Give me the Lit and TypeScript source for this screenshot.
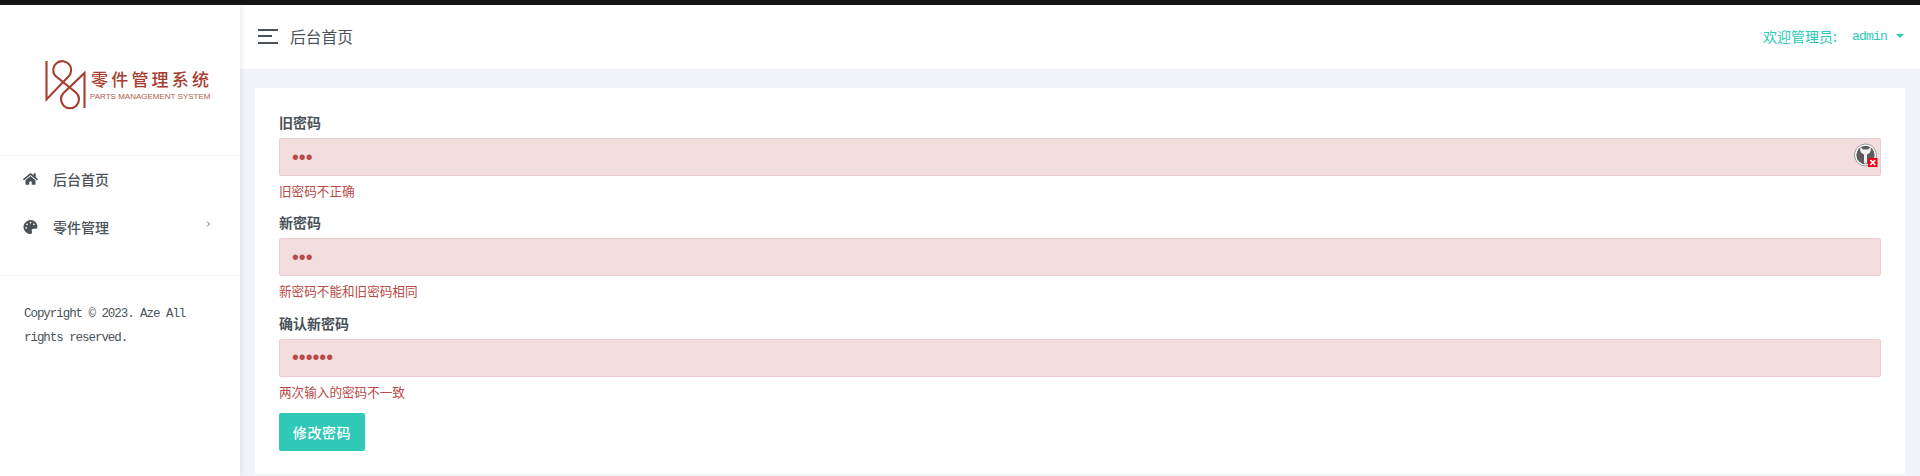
import { LitElement, html, css } from "lit";
import { customElement } from "lit/decorators.js";

@customElement("app-root")
export class AppRoot extends LitElement {
  static styles = css`
    :host { display: block; height: 476px; overflow: hidden; background: #f3f4f9; color: #4b5359;
      font-family: "Noto Sans CJK SC", "Noto Sans", sans-serif; }
    * { box-sizing: border-box; }
    .topline { height: 5px; background: #141414; }
    .layout { display: flex; height: 471px; }
    .side { width: 240px; flex: none; background: #fff; box-shadow: 1px 0 6px rgba(60,70,110,.12); position: relative; z-index: 1; }
    .logo { height: 151px; border-bottom: 1px solid #f3f4f6; display: flex; padding: 54px 0 0 45px; }
    .logo svg { width: 42px; height: 52px; flex: none; display: block; }
    .logo-text { margin-left: 3px; padding-top: 10px; color: #a63d2f; display: flex; flex-direction: column; }
    .logo-cn { font-size: 17px; font-weight: 500; line-height: 20px; letter-spacing: 3.2px; white-space: nowrap; margin-left: 1px; }
    .logo-en { font: 8px/11px "Liberation Sans", sans-serif; white-space: nowrap; margin-top: 2px; opacity: .85; }
    .menu { height: 120px; border-bottom: 1px solid #f3f4f6; }
    .item { height: 48px; display: flex; align-items: center; padding: 0 23px 3px; font-size: 14px; font-weight: 500; color: #4b5359; }
    .item + .item { padding-bottom: 2px; }
    .item svg.ic { width: 15px; height: 14px; fill: #4b5359; flex: none; }
    .item span { margin-left: 15px; flex: 1; }
    .chev { width: 5px; height: 6px; fill: none; stroke: #6b7278; stroke-width: 1; margin-top: -6px; margin-right: 6px; }
    .copy { padding: 26px 20px 0 24px; font: 12.5px/24px "Liberation Mono", monospace; letter-spacing: -1.05px; color: #4b5359; }
    .main { flex: 1; min-width: 0; display: flex; flex-direction: column; }
    .head { height: 64px; background: #fff; display: flex; align-items: center; padding: 0 16px 2px 18px; }
    .burger { width: 20px; display: flex; flex-direction: column; gap: 4.5px; }
    .burger i { display: block; height: 2px; background: #4b5359; }
    .burger i:nth-child(2) { width: 14px; }
    .title { margin-left: 12px; font-size: 15.75px; flex: 1; color: #4b5359; }
    .user { display: flex; align-items: center; color: #2bcab7; font-size: 14px; }
    .user b { font: 13px "Liberation Mono", monospace; letter-spacing: -.8px; margin-left: 15px; padding-top: 1px; }
    .caret { width: 0; height: 0; border-left: 4px solid transparent; border-right: 4px solid transparent; border-top: 4.5px solid #2bcab7; margin-left: 9px; }
    .content { padding: 19px 15px 0; }
    .card { background: #fff; height: 386px; padding: 26px 24px 0; }
    .group { margin-bottom: 13.5px; }
    .group.last { margin-bottom: 11.6px; }
    label { display: block; font-size: 14px; font-weight: 700; line-height: 16px; margin-bottom: 8px; color: #4b5359; }
    .field { position: relative; }
    input { display: block; width: 100%; height: 38px; background: #f2dede; border: 1px solid #ebccd1; border-radius: 2px;
      padding: 0 12px; color: #b94a48; font-size: 19.5px; font-family: "Liberation Sans", sans-serif; outline: none; }
    .err { margin-top: 6px; font-size: 12.6px; line-height: 18.9px; color: #b94a48; }
    .pm { position: absolute; right: 3px; top: 5px; width: 24px; height: 24px; }
    button { display: block; width: 86px; height: 38px; border: 0; border-radius: 2px; background: #30c9b7; color: #fff;
      font: 500 14px "Noto Sans CJK SC", sans-serif; letter-spacing: .6px; padding: 0; }
  `;

  private group(name: string, value: string, err: string, icon = false, last = false) {
    return html`<div class="group ${last ? "last" : ""}">
      <label>${name}</label>
      <div class="field">
        <input type="password" .value=${value} />
        ${icon
          ? html`<svg class="pm" viewBox="0 0 24 24">
              <circle cx="11.5" cy="12" r="11" fill="#fff" stroke="#9a9a9a" stroke-width="1" />
              <circle cx="11.5" cy="12" r="9.2" fill="#5c5c5c" />
              <path d="M6.5 4 Q5 9.5 10 11.5 V20.5 H13 V11.5 Q18 9.5 16.5 4 L14 6.5 H9 Z" fill="#f2f2f2" />
              <rect x="14" y="15" width="9.5" height="9" fill="#f5000f" />
              <path d="M16.4 17 L21.2 22 M21.2 17 L16.4 22" stroke="#fff" stroke-width="1.8" />
            </svg>`
          : ""}
      </div>
      <div class="err">${err}</div>
    </div>`;
  }

  render() {
    return html`
      <div class="topline"></div>
      <div class="layout">
        <aside class="side">
          <div class="logo">
            <svg viewBox="45 59 42 52">
              <path d="M46.5 61 V99.5 L68 77 A9 9 0 1 0 55 75.5 L76.5 93 A9 9 0 1 1 63.5 93 L84.5 73 V108" fill="none" stroke="#a63d2f" stroke-width="2.1" />
            </svg>
            <div class="logo-text">
              <div class="logo-cn">零件管理系统</div>
              <div class="logo-en">PARTS MANAGEMENT SYSTEM</div>
            </div>
          </div>
          <div class="menu">
            <div class="item">
              <svg class="ic" viewBox="0 0 576 512"><path d="M280.37 148.26L96 300.11V464a16 16 0 0 0 16 16l112.06-.29a16 16 0 0 0 15.92-16V368a16 16 0 0 1 16-16h64a16 16 0 0 1 16 16v95.64a16 16 0 0 0 16 16.05L464 480a16 16 0 0 0 16-16V300L295.67 148.26a12.19 12.19 0 0 0-15.3 0zM571.6 251.47L488 182.56V44.05a12 12 0 0 0-12-12h-56a12 12 0 0 0-12 12v72.61L318.47 43a48 48 0 0 0-61 0L4.34 251.47a12 12 0 0 0-1.6 16.9l25.5 31A12 12 0 0 0 45.15 301l235.22-193.74a12.19 12.19 0 0 1 15.3 0L530.9 301a12 12 0 0 0 16.9-1.6l25.5-31a12 12 0 0 0-1.7-16.93z" /></svg>
              <span>后台首页</span>
            </div>
            <div class="item">
              <svg class="ic" viewBox="0 0 512 512"><path d="M204.3 5C104.9 24.4 24.8 104.3 5.2 203.4c-37 187 131.7 326.4 258.8 306.7 41.2-6.4 61.4-54.6 42.5-91.7-23.1-45.4 9.9-98.4 60.9-98.4h79.7c35.8 0 64.8-29.6 64.9-65.3C511.5 97.1 368.1-26.9 204.3 5zM96 320c-17.7 0-32-14.3-32-32s14.3-32 32-32 32 14.3 32 32-14.3 32-32 32zm32-128c-17.7 0-32-14.3-32-32s14.3-32 32-32 32 14.3 32 32-14.3 32-32 32zm128-64c-17.7 0-32-14.3-32-32s14.3-32 32-32 32 14.3 32 32-14.3 32-32 32zm128 64c-17.7 0-32-14.3-32-32s14.3-32 32-32 32 14.3 32 32-14.3 32-32 32z" /></svg>
              <span>零件管理</span>
              <svg class="chev" viewBox="0 0 5 6"><path d="M1 .5 L3.5 3 L1 5.5" /></svg>
            </div>
          </div>
          <div class="copy">Copyright © 2023. Aze All rights reserved.</div>
        </aside>
        <div class="main">
          <header class="head">
            <div class="burger"><i></i><i></i><i></i></div>
            <div class="title">后台首页</div>
            <div class="user">欢迎管理员:<b>admin</b><i class="caret"></i></div>
          </header>
          <div class="content">
            <div class="card">
              ${this.group("旧密码", "123", "旧密码不正确", true)}
              ${this.group("新密码", "123", "新密码不能和旧密码相同")}
              ${this.group("确认新密码", "123456", "两次输入的密码不一致", false, true)}
              <button>修改密码</button>
            </div>
          </div>
        </div>
      </div>
    `;
  }
}
